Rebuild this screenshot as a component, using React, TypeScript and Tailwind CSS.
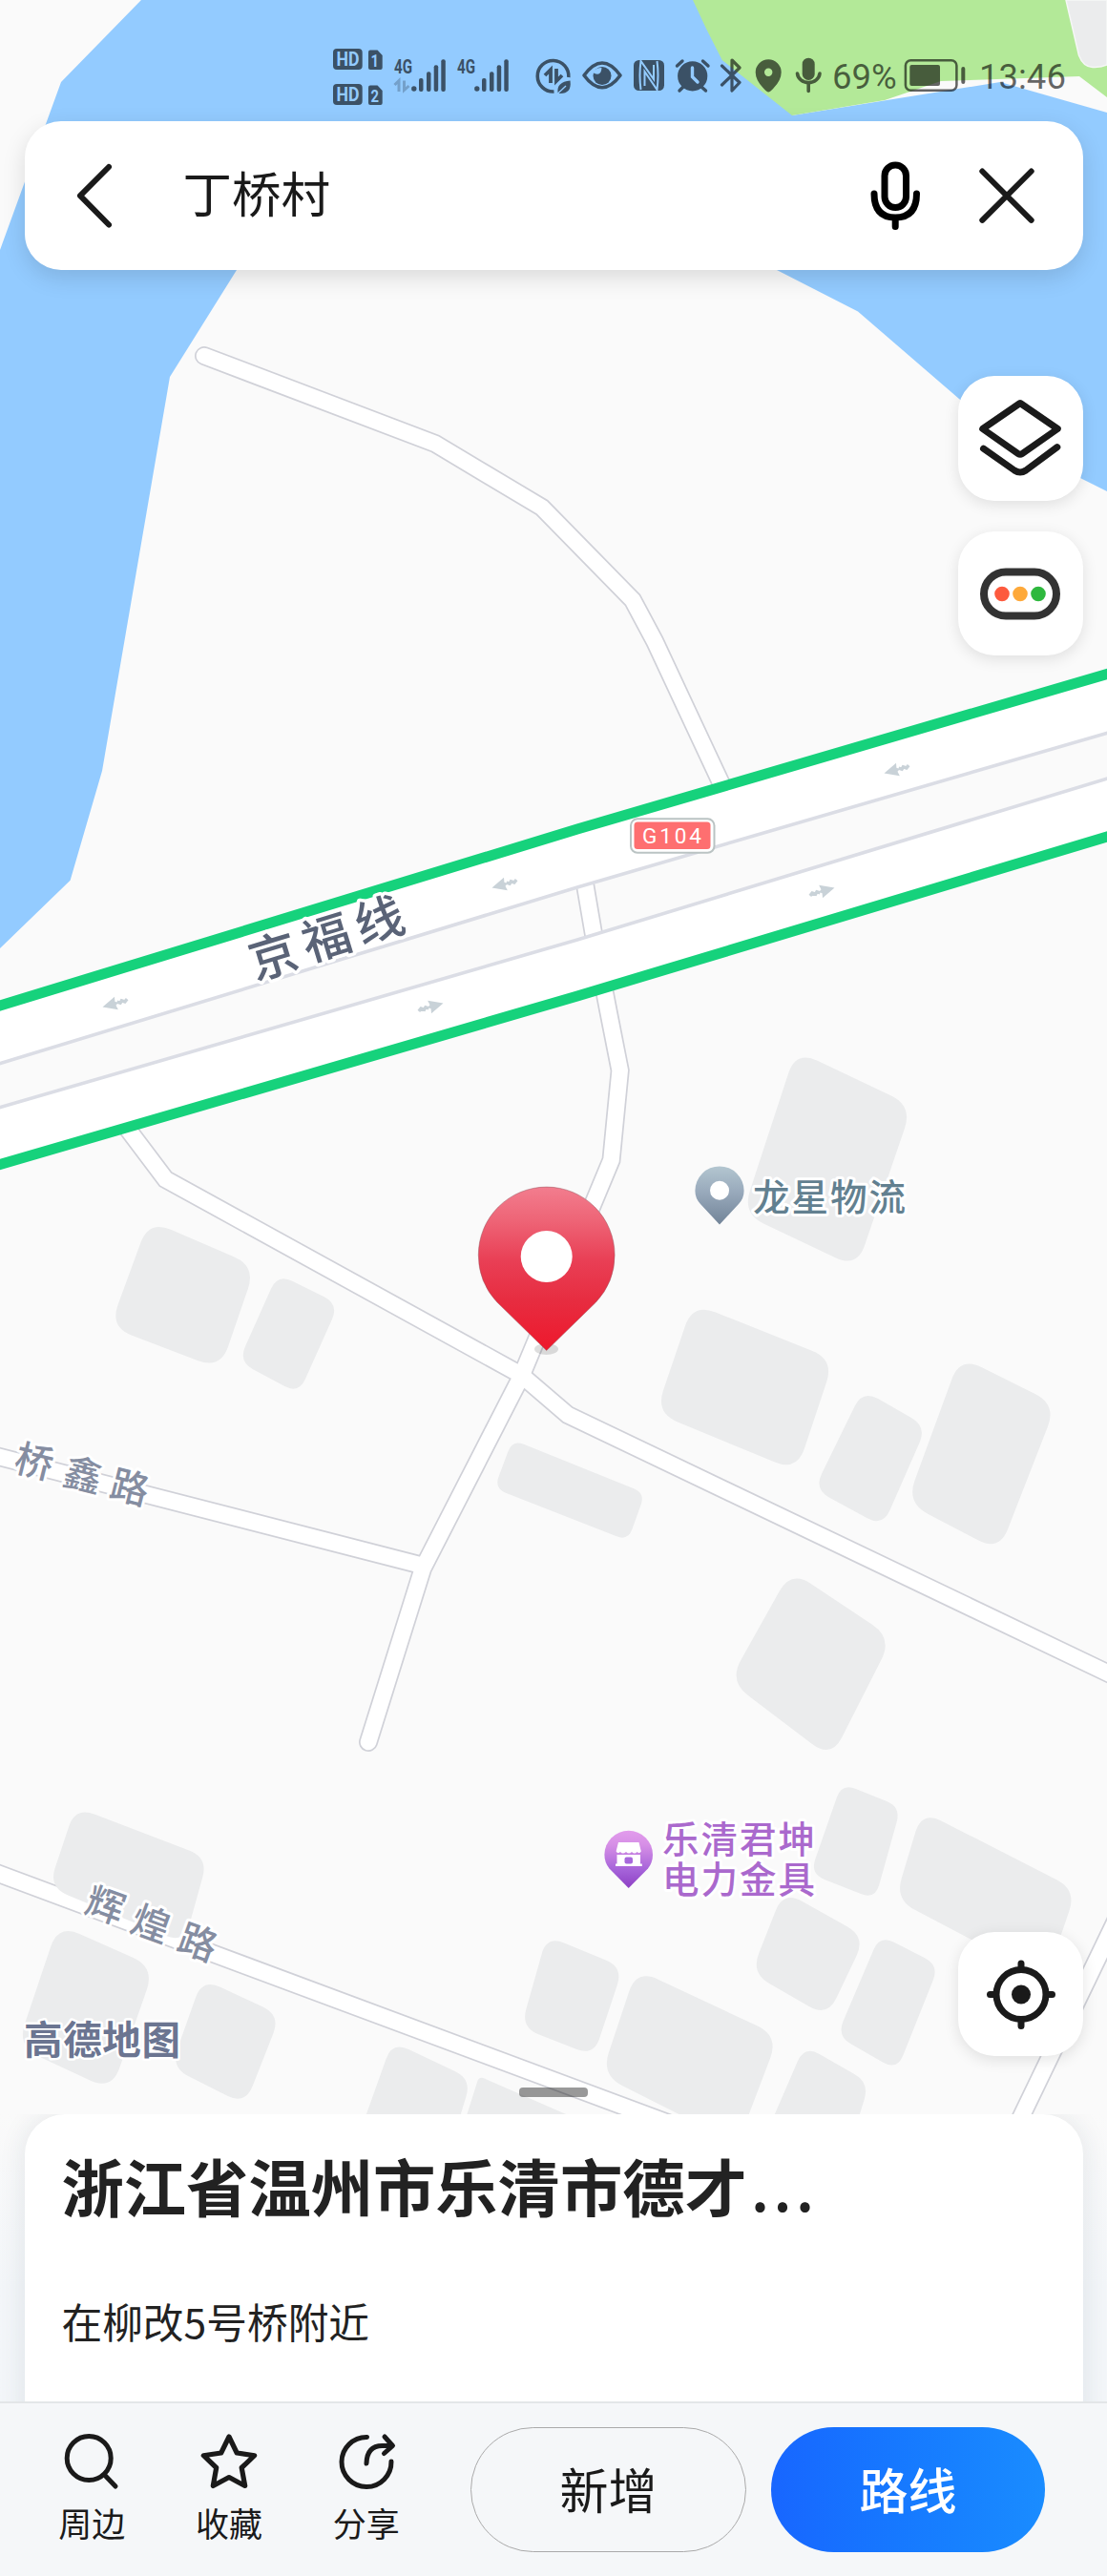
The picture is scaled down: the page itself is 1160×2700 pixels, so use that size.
import type { ReactNode } from "react";

type Point = [number, number];

const roads = [
  "M214 373 L456 465 L568 532 L663 629 L686 672 L757 824",
  "M611 915 L623 985 L637.5 1060 L649.7 1122 L640.5 1216 L546 1443 L443 1644 L386 1826",
  "M120 1165 L173.5 1236 L546 1441 L595 1483 L1170 1758",
  "M-20 1522 L443 1641",
  "M-20 1957 L740 2240",
  "M1054 2252 L1175 2001",
];

const buildings: Point[][] = [
  [[834, 1101], [956, 1159], [898, 1329], [778, 1272]],
  [[726, 1366], [874, 1425], [835, 1542], [687, 1481]],
  [[904, 1457], [971, 1495], [925, 1600], [853, 1561]],
  [[1006, 1422], [1107, 1472], [1047, 1626], [950, 1575]],
  [[537, 1509], [676, 1565], [658, 1615], [518, 1560]],
  [[829, 1646], [935, 1717], [871, 1843], [764, 1762]],
  [[156, 1279], [268, 1327], [231, 1435], [115, 1391]],
  [[291, 1335], [355, 1367], [313, 1461], [250, 1427]],
  [[79, 1894], [218, 1947], [193, 2037], [51, 1978]],
  [[61, 2017], [162, 2062], [117, 2191], [18, 2145]],
  [[212, 2074], [294, 2112], [257, 2206], [179, 2167]],
  [[411, 2140], [494, 2179], [471, 2255], [370, 2255]],
  [[502, 2176], [650, 2241], [640, 2265], [474, 2265]],
  [[882, 1869], [944, 1894], [917, 1991], [849, 1964]],
  [[966, 1898], [1128, 1981], [1096, 2074], [938, 1991]],
  [[821, 1982], [907, 2030], [867, 2114], [787, 2068]],
  [[922, 2028], [984, 2060], [940, 2170], [877, 2134]],
  [[573, 2029], [653, 2062], [622, 2155], [546, 2125]],
  [[667, 2064], [816, 2134], [773, 2247], [630, 2175]],
  [[843, 2144], [911, 2183], [889, 2255], [795, 2255]],
];

const trafficArrows = [
  { x: 120, y: 1052, angle: -16 },
  { x: 528, y: 927, angle: -16 },
  { x: 939, y: 807, angle: -16 },
  { x: 452, y: 1055, angle: 164 },
  { x: 862, y: 934, angle: 164 },
];

const actions = [
  { name: "周边", icon: <SearchIcon /> },
  { name: "收藏", icon: <StarIcon /> },
  { name: "分享", icon: <ShareIcon /> },
];

// closed polygon with softened corners
function roundedPath(points: Point[]) {
  const n = points.length;
  const dist = (a: Point, b: Point) => Math.hypot(a[0] - b[0], a[1] - b[1]);
  const shortest = Math.min(...points.map((p, i) => dist(p, points[(i + 1) % n])));
  const cut = Math.min(25, shortest * 0.24);
  const toward = (a: Point, b: Point) => {
    const t = cut / dist(a, b);
    return `${a[0] + (b[0] - a[0]) * t} ${a[1] + (b[1] - a[1]) * t}`;
  };
  const parts = points.map((p, i) => {
    const prev = points[(i + n - 1) % n];
    const next = points[(i + 1) % n];
    return `${i === 0 ? "M" : "L"}${toward(p, prev)} Q${p[0]} ${p[1]} ${toward(p, next)}`;
  });
  return parts.join(" ") + "Z";
}

function MapCanvas() {
  return (
    <svg className="absolute inset-0" width="1160" height="2216" viewBox="0 0 1160 2216">
      <defs>
        <linearGradient id="redPin" x1="0" y1="0" x2="0" y2="1">
          <stop offset="0" stopColor="#f27d8e" />
          <stop offset="0.2" stopColor="#ee6577" />
          <stop offset="0.45" stopColor="#e93f55" />
          <stop offset="0.7" stopColor="#e72c40" />
          <stop offset="1" stopColor="#ee182c" />
        </linearGradient>
        <linearGradient id="grayPin" x1="0" y1="0" x2="0" y2="1">
          <stop offset="0" stopColor="#b3c6d0" />
          <stop offset="0.45" stopColor="#98a9bb" />
          <stop offset="1" stopColor="#728498" />
        </linearGradient>
        <linearGradient id="purplePin" x1="0" y1="0" x2="0" y2="1">
          <stop offset="0" stopColor="#e29cec" />
          <stop offset="0.25" stopColor="#d68fe6" />
          <stop offset="0.7" stopColor="#a461d8" />
          <stop offset="1" stopColor="#8d40c4" />
        </linearGradient>
      </defs>

      <rect width="1160" height="2216" fill="#fafafa" />

      {/* water and park */}
      <path d="M148 0 L64 86 L0 262 L0 994 L73.6 922.7 L107 808 L178 395 L248 283 L500 200 L813 282.5 L899 326.5 L1005 418 L1070 470 L1160 515 L1160 118 L1048 86 L830 121 L830 0Z" fill="#93cbff" />
      <path d="M726 0 L740 30 L756.7 63 L830 121 L927 105 L986 85 L1131 80 L1160 102 L1160 0Z" fill="#b3e998" />
      <path d="M1117 0 L1130.5 58 Q1135 70 1145 70.5 Q1154 71 1160 68 L1160 0Z" fill="#ebeced" stroke="#f6f7f6" strokeWidth="1.5" />

      <g fill="none" strokeLinecap="round">
        {roads.map((d) => <path key={d} d={d} stroke="#d0d1d8" strokeWidth="20" />)}
        {roads.map((d) => <path key={d} d={d} stroke="#fff" strokeWidth="16.6" />)}
      </g>

      <g fill="#ebeced">
        {buildings.map((b, i) => <path key={i} d={roundedPath(b)} />)}
      </g>

      {/* 京福线 carriageways */}
      <path d="M0 1054 L605 869 L1160 706 L1160 768 L605 930 L0 1115Z" fill="#fff" />
      <path d="M0 1161 L605 985 L1160 816 L1160 877 L605 1044 L0 1221Z" fill="#fff" />
      <g fill="none">
        <path d="M-5 1116.2 L605 930 L1165 766.8" stroke="#dbdde5" strokeWidth="3.6" />
        <path d="M-5 1162.2 L605 985 L1165 814.5" stroke="#dbdde5" strokeWidth="3.6" />
        <path d="M-10 1057 L605 869 L1170 703.5" stroke="#16d27c" strokeWidth="11" />
        <path d="M-10 1223.5 L605 1044 L1170 874" stroke="#16d27c" strokeWidth="11" />
      </g>
      {trafficArrows.map((a) => (
        <g key={a.x} transform={`translate(${a.x} ${a.y}) rotate(${a.angle})`}>
          <path d="M-13 0 L2 -7 L1 -2 L4 0 L1 2 L2 7Z" fill="#c9d2d8" />
          <path d="M3 -1 L6 1 L8 -1 L11 1 L14 -1" fill="none" stroke="#c9d2d8" strokeWidth="3.4" />
        </g>
      ))}

      {/* road shield */}
      <rect x="661" y="858.3" width="87.5" height="35.5" rx="7" fill="#fff" stroke="#bac3c3" strokeWidth="2" />
      <rect x="664.5" y="861.5" width="80" height="28.5" rx="3.5" fill="#fe6f70" />
      <text x="704" y="884" textAnchor="middle" textLength="62" fontSize="22.5" fill="#fff" className="font-[Roboto]">G104</text>

      <g className="font-['Noto_Sans_CJK_SC',sans-serif] [paint-order:stroke]" stroke="#fff" strokeLinejoin="round" textAnchor="middle">
        <g fontSize="51" fontWeight="500" fill="#5a6377" strokeWidth="7">
          <text transform="translate(286.7 1002.7) rotate(-17)" y="18">京</text>
          <text transform="translate(342.2 983.5) rotate(-17)" y="18">福</text>
          <text transform="translate(397.7 965) rotate(-17)" y="18">线</text>
        </g>
        <g fontSize="40" fontWeight="500" fill="#858da1" strokeWidth="6">
          <text transform="translate(36 1532) rotate(14)" y="14.500">桥</text>
          <text transform="translate(87 1546) rotate(14)" y="14.500">鑫</text>
          <text transform="translate(136 1559) rotate(14)" y="14.500">路</text>
          <text transform="translate(110.6 1997) rotate(20)" y="14.500">辉</text>
          <text transform="translate(158.3 2016.500) rotate(20)" y="14.500">煌</text>
          <text transform="translate(207.3 2036) rotate(20)" y="14.500">路</text>
        </g>
        <text x="107" y="2153" textLength="164" fontSize="40.5" fontWeight="700" fill="#6b7591" strokeWidth="5">高德地图</text>
        <text x="869" y="1269" textLength="160" fontSize="38.5" fontWeight="500" fill="#628090" strokeWidth="6">龙星物流</text>
        <text y="1941.5" fontSize="38.5" fontWeight="500" letterSpacing="2" fill="#aa69cd" strokeWidth="6">
          <tspan x="775">乐清君坤</tspan>
          <tspan x="775" dy="42">电力金具</tspan>
        </text>
      </g>

      {/* poi pins */}
      <path d="M754 1283.5 L734 1262 Q728.4 1256 728.4 1248 A25.6 25.6 0 0 1 779.6 1248 Q779.6 1256 774 1262Z" fill="url(#grayPin)" />
      <circle cx="754" cy="1247.8" r="10" fill="#fff" />
      <path d="M658.7 1979 L638.5 1958.5 Q633.4 1952 633.4 1944 A25.3 25.3 0 0 1 684 1944 Q684 1952 679 1958.5Z" fill="url(#purplePin)" />
      <path d="M648 1931 H669.5 L671.8 1940.5 Q670 1943.5 667.5 1941 Q665 1944 662 1941 Q659 1944 656 1941 Q652.5 1944 650 1941 Q647.5 1943.5 645.6 1940.5Z" fill="#fff" />
      <path d="M646.5 1944 H671 V1953.5 H672.8 V1956 H645 V1953.5 H646.5Z" fill="#fff" />
      <rect x="654.5" y="1946.5" width="8.5" height="7" rx="2" fill="#a868dc" />

      <ellipse cx="572.5" cy="1414" rx="12.5" ry="6" fill="#000" opacity="0.13" />
      <path d="M572.7 1415.5 L521 1365 Q501.3 1344 501.3 1315.5 A71.4 71.4 0 0 1 644.1 1315.5 Q644.1 1344 624.4 1365Z" fill="url(#redPin)" stroke="#9a5560" strokeOpacity="0.5" strokeWidth="1" />
      <circle cx="572.7" cy="1317" r="27" fill="#fff" />
    </svg>
  );
}

function Glyph({ x, w, children }: { x: number; w: number; children: ReactNode }) {
  return (
    <svg className="shrink-0" width={w} height="64" viewBox={`${x} 48 ${w} 64`}>
      {children}
    </svg>
  );
}

function SimBadge({ y, n }: { y: number; n: string }) {
  return (
    <g className="font-[Roboto]" fontWeight="700">
      <rect x="349" y={y} width="30.7" height="22" rx="4" fill="#3b5166" />
      <text x="352.5" y={y + 18} fontSize="19.5" textLength="24" lengthAdjust="spacingAndGlyphs" fill="#93cbff">HD</text>
      <path d={`M388 ${y + 1.5} H395.5 L400.7 ${y + 7} V${y + 20} Q400.7 ${y + 22} 398.7 ${y + 22} H388 Q386 ${y + 22} 386 ${y + 20} V${y + 3.5} Q386 ${y + 1.5} 388 ${y + 1.5}Z`} fill="#3b5166" />
      <text x="392.8" y={y + 18.5} fontSize="18" textAnchor="middle" textLength="8.5" lengthAdjust="spacingAndGlyphs" fill="#93cbff">{n}</text>
    </g>
  );
}

function Signal({ x, data }: { x: number; data?: boolean }) {
  return (
    <Glyph x={x} w={66}>
      <g fill="#3b5166">
        <text x={x + 8} y="77" fontSize="20" fontWeight="700" textLength="19" lengthAdjust="spacingAndGlyphs" className="font-[Roboto]">4G</text>
        <circle cx={x + 28.8} cy="93" r="2.7" />
        <rect x={x + 34} y="82" width="4.5" height="14" rx="2" />
        <rect x={x + 42} y="75.3" width="4.5" height="20.7" rx="2" />
        <rect x={x + 49.7} y="68.3" width="4.5" height="27.7" rx="2" />
        <rect x={x + 57.3} y="62.3" width="4.5" height="33.7" rx="2" />
      </g>
      {data && (
        <path d={`M${x + 8.5} 89 L${x + 13} 84.5 V96 M${x + 18.5} 84.5 V94.5 L${x + 23.5} 90`} fill="none" stroke="#3b5166" strokeOpacity="0.35" strokeWidth="3" />
      )}
    </Glyph>
  );
}

function StatusBar() {
  return (
    <div className="flex h-16 pl-[345px]">
      <Glyph x={345} w={60}>
        <SimBadge y={51} n="1" />
        <SimBadge y={88} n="2" />
      </Glyph>
      <Signal x={405} data />
      <Signal x={471} />
      <Glyph x={537} w={70}>
        <path d="M580.5 96 A16.3 16.3 0 1 1 595.8 81" fill="none" stroke="#3b5166" strokeWidth="3.6" />
        <path d="M571 79 L577 73 V87 M583 72 V85 L589 79" fill="none" stroke="#3b5166" strokeWidth="3.8" />
        <path d="M584.5 97 Q583 86 597.5 84.5 Q599.5 98.5 586 98 Z" fill="#3b5166" />
        <path d="M584 98.5 L593 90" stroke="#93cbff" strokeWidth="1.3" />
      </Glyph>
      <Glyph x={607} w={50}>
        <path d="M612 79 Q631 53 650 79 Q631 104.5 612 79Z" fill="none" stroke="#3b5166" strokeWidth="3.6" strokeLinejoin="round" />
        <circle cx="631" cy="79.5" r="9.5" fill="#3b5166" />
        <path d="M623 77 Q630 80 630.5 71 Q624 71 621 76Z" fill="#93cbff" />
      </Glyph>
      <Glyph x={657} w={45}>
        <rect x="664" y="63" width="32" height="32" rx="5.5" fill="#3b5166" />
        <path d="M671.5 94 Q669.5 79 671.5 64 L685 83 V68 M688.5 64 Q690.5 79 688.5 94 L675.5 75 V90" fill="none" stroke="#93cbff" strokeWidth="2" />
      </Glyph>
      <Glyph x={702} w={47}>
        <circle cx="725.7" cy="79.8" r="15.6" fill="#3b5166" />
        <path d="M709.5 69 L715 64 M742 69 L736.5 64 M712 95 L716 91 M739.5 95 L735 91" stroke="#3b5166" strokeWidth="3.4" strokeLinecap="round" />
        <path d="M725.5 71 V80.5 L731 86" fill="none" stroke="#93cbff" strokeWidth="3.4" strokeLinecap="round" />
      </Glyph>
      <Glyph x={749} w={34}>
        <path d="M756.5 69 L775 86.5 L767 95 V63 L775 71 L756.5 89" fill="none" stroke="#000" strokeOpacity="0.6" strokeWidth="3.2" strokeLinecap="round" strokeLinejoin="round" />
      </Glyph>
      <Glyph x={783} w={43}>
        <path fillRule="evenodd" d="M805.2 96.5 Q803.5 96.5 800 92.5 Q791.7 84 791.7 75.7 A13.5 13.5 0 0 1 818.7 75.7 Q818.7 84 810.5 92.5 Q807 96.5 805.2 96.5Z M801 75.7 a4.2 4.2 0 1 0 8.4 0 a4.2 4.2 0 1 0 -8.4 0Z" fill="#000" fillOpacity="0.6" />
      </Glyph>
      <Glyph x={826} w={44}>
        <g opacity="0.6">
          <rect x="840.7" y="60.7" width="13" height="23.3" rx="6.5" />
          <path d="M835.5 77 A11.8 10.5 0 0 0 859 77 M847.2 88 V95.5" fill="none" stroke="#000" strokeWidth="3.6" strokeLinecap="round" />
        </g>
      </Glyph>
      <span className="w-[73px] pl-[2px] font-[Roboto] text-[36.5px] leading-[65px] text-black/60">69%</span>
      <Glyph x={943} w={76}>
        <g opacity="0.6">
          <rect x="948.9" y="63.3" width="53.5" height="31.5" rx="5.5" fill="none" stroke="#000" strokeWidth="2.5" />
          <rect x="953.3" y="68" width="31.7" height="22" rx="2" />
          <rect x="1007.3" y="70" width="4" height="18" rx="2" />
        </g>
      </Glyph>
      <span className="pl-[7px] font-[Roboto] text-[36.5px] leading-[65px] text-black/60">13:46</span>
    </div>
  );
}

function SearchCard() {
  return (
    <div className="mx-[25.5px] mt-[15px] flex h-[155.5px] items-center rounded-[38px] bg-white pr-[50px] pl-[53px] shadow-[0_8px_24px_rgba(0,0,0,0.13)]">
      <svg width="40" height="70" viewBox="78.5 169.5 40 70">
        <path d="M113.5 174.5 L83.5 204.7 L113.5 235" fill="none" stroke="#1a1a1a" strokeWidth="6" strokeLinecap="round" strokeLinejoin="round" />
      </svg>
      <span className="ml-[73px] pb-[7px] text-[51.5px] leading-[60px] text-[#1a1a1a]">丁桥村</span>
      <svg className="ml-auto" width="60" height="76" viewBox="907 166.5 60 76">
        <g fill="none" stroke="#000" strokeWidth="7" strokeLinecap="round">
          <rect x="926" y="172.5" width="22.5" height="44.5" rx="11.25" />
          <path d="M915 202.5 Q915 227.5 937.2 227.5 Q959.5 227.5 959.5 202.5 M937.2 228 V237" />
        </g>
      </svg>
      <svg className="ml-[57px]" width="60" height="60" viewBox="1024 174.7 60 60">
        <path d="M1028.3 179.2 L1079.7 230.5 M1079.7 179.2 L1028.3 230.5" stroke="#1a1a1a" strokeWidth="6" strokeLinecap="round" />
      </svg>
    </div>
  );
}

function MapButton({ children }: { children: ReactNode }) {
  return (
    <button className="flex h-[130.5px] w-[130.5px] items-center justify-center rounded-[38px] bg-white shadow-[0_4px_16px_rgba(0,0,0,0.11)]">
      <svg width="90" height="90" viewBox="-45 -45 90 90" fill="none" stroke="#1a1a1a" strokeWidth="7" strokeLinecap="round" strokeLinejoin="round">
        {children}
      </svg>
    </button>
  );
}

function MapControls() {
  return (
    <div className="mt-[111.5px] mr-[25.5px] flex flex-col items-end gap-8">
      <MapButton>
        <path d="M0 -36.5 L39.3 -9.5 L2 16.6 Q0 18 -2 16.6 L-39.3 -9.5Z" />
        <path d="M-38.5 11.2 L-6 34 Q0 38 6 34 L38.8 9.6" />
      </MapButton>
      <MapButton>
        <rect x="-38" y="-22.5" width="76" height="46" rx="23" stroke="#333" strokeWidth="8" />
        <g stroke="none">
          <circle cx="-19" cy="0.5" r="7.8" fill="#fd5a3e" />
          <circle cx="0" cy="0.5" r="7.8" fill="#fea93a" />
          <circle cx="19" cy="0.5" r="7.8" fill="#2eb83e" />
        </g>
      </MapButton>
    </div>
  );
}

function SearchIcon() {
  return (
    <svg width="64" height="64" viewBox="64 2548 64 64" fill="none" stroke="#1a1a1a" strokeWidth="5" strokeLinecap="round">
      <circle cx="93.2" cy="2576.5" r="23" />
      <path d="M109.5 2594 L121 2606" />
    </svg>
  );
}

function StarIcon() {
  return (
    <svg width="64" height="64" viewBox="207.3 2548 64 64" fill="none" stroke="#1a1a1a" strokeWidth="5.2" strokeLinejoin="round">
      <path d="M239.3 2554 L247.5 2571 L266 2573.7 L252.5 2586.5 L256 2605.5 L239.3 2596.5 L222.6 2605.5 L226 2586.5 L212.6 2573.7 L231 2571Z" />
    </svg>
  );
}

function ShareIcon() {
  return (
    <svg width="64" height="64" viewBox="351.5 2548 64 64" fill="none" stroke="#1a1a1a" strokeWidth="5" strokeLinecap="round" strokeLinejoin="round">
      <path d="M384 2554.5 A26 26 0 1 0 409.5 2580" />
      <path d="M383.5 2582 Q384 2563.5 400 2563.5 H409 M402.5 2554 L411 2563.5 L402 2571.5" />
    </svg>
  );
}

function PlaceCard() {
  return (
    <div className="h-[301px] overflow-hidden bg-linear-to-b from-[#fafafa] to-[#f3f6f9] to-60% px-[25.5px]">
      <div className="h-[340px] rounded-t-[42px] bg-white px-[39px] pt-[28px] text-[#222] shadow-[0_0_28px_rgba(30,50,70,0.10)]">
        <h1 className="text-[65.3px] leading-[92px] font-bold">
          浙江省温州市乐清市德才<span className="ml-[4px] font-medium tracking-[4px]">...</span>
        </h1>
        <p className="mt-[65px] text-[42.7px] leading-[62px]">在柳改5号桥附近</p>
      </div>
    </div>
  );
}

function BottomBar() {
  return (
    <div className="flex h-[183px] border-t-2 border-[#e3e6e8] bg-[#f5f7f9] pt-[25px] pl-[24.5px]">
      {actions.map((a) => (
        <div key={a.name} className="flex w-[143.7px] flex-col items-center pt-[4px]">
          {a.icon}
          <span className="mt-[7px] text-[35px] leading-[50px] text-[#1a1a1a]">{a.name}</span>
        </div>
      ))}
      <button className="ml-[37.5px] h-[131px] w-[289px] rounded-full border-[1.5px] border-[#aaa] pb-[3px] text-[51px] text-[#1a1a1a]">新增</button>
      <button className="ml-[26px] h-[131px] w-[287px] rounded-full bg-linear-to-r from-[#1866ff] to-[#1a8cff] pb-[3px] text-[51px] font-medium text-white">路线</button>
    </div>
  );
}

export default function App() {
  return (
    <main className="flex h-[2700px] w-[1160px] flex-col overflow-hidden bg-[#fafafa] font-['Noto_Sans_CJK_SC',sans-serif]">
      <section className="relative h-[2216px]">
        <MapCanvas />
        <div className="relative flex h-full flex-col pt-12">
          <StatusBar />
          <SearchCard />
          <MapControls />
          <div className="mt-auto mr-[25.5px] mb-[33px] flex justify-end">
            <MapButton>
              <circle cx="1" cy="0.5" r="26" />
              <circle cx="1" cy="0.5" r="10" fill="#1a1a1a" stroke="none" />
              <path d="M1 -26 V-32 M1 27.5 V33.5 M-25.5 0.5 H-31.5 M27.5 0.5 H33.5" />
            </MapButton>
          </div>
          <div className="mx-auto mb-[18px] h-[10px] w-[72px] shrink-0 rounded-[4px] bg-black/40" />
        </div>
      </section>
      <PlaceCard />
      <BottomBar />
    </main>
  );
}
